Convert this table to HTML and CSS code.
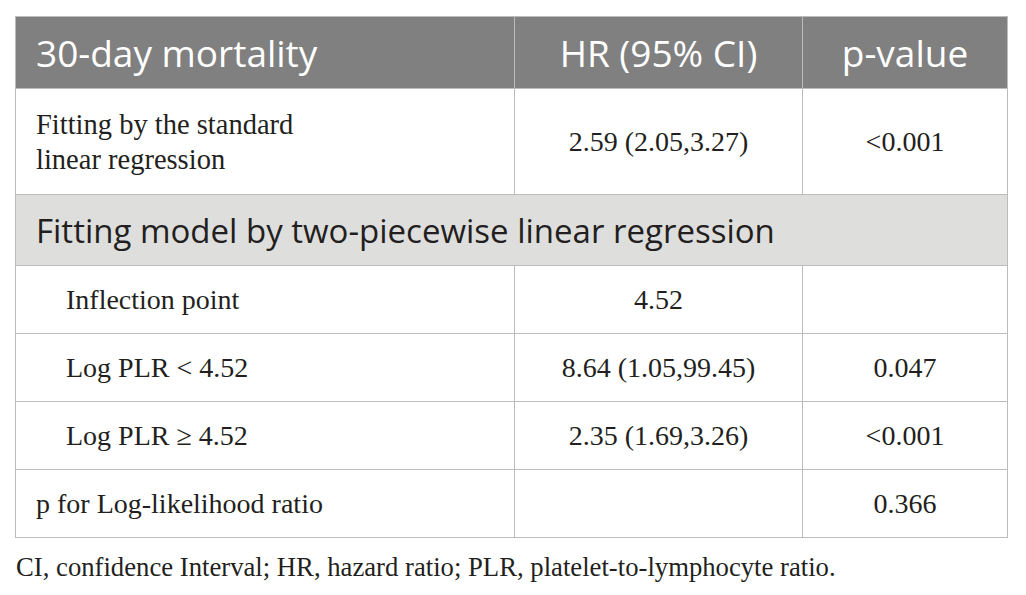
FILE: index.html
```html
<!DOCTYPE html>
<html lang="en">

<head>
    <meta charset="UTF-8">
    <title>Table</title>
    <link rel="stylesheet" href="styles.css">
</head>

<body>
    <table class="tab">
        <colgroup>
            <col class="c1">
            <col class="c2">
            <col class="c3">
        </colgroup>
        <tr class="head">
            <th class="left">30-day mortality</th>
            <th>HR (95% CI)</th>
            <th>p-value</th>
        </tr>
        <tr class="tall">
            <td class="left">Fitting by the standard<br>linear regression</td>
            <td>2.59 (2.05,3.27)</td>
            <td>&lt;0.001</td>
        </tr>
        <tr class="section">
            <td class="left" colspan="3">Fitting model by two-piecewise linear regression</td>
        </tr>
        <tr>
            <td class="left sub">Inflection point</td>
            <td>4.52</td>
            <td></td>
        </tr>
        <tr>
            <td class="left sub">Log PLR &lt; 4.52</td>
            <td>8.64 (1.05,99.45)</td>
            <td>0.047</td>
        </tr>
        <tr>
            <td class="left sub">Log PLR ≥ 4.52</td>
            <td>2.35 (1.69,3.26)</td>
            <td>&lt;0.001</td>
        </tr>
        <tr>
            <td class="left">p for Log-likelihood ratio</td>
            <td></td>
            <td>0.366</td>
        </tr>
    </table>
    <p class="note">CI, confidence Interval; HR, hazard ratio; PLR, platelet-to-lymphocyte ratio.</p>
</body>

</html>
```

FILE: styles.css
```css
body {
    margin: 0;
    padding: 16px 19px 0 15px;
    background: #fff;
    font-family: "Liberation Serif", "Times New Roman", serif;
    color: #231f20;
}

.tab {
    width: 992px;
    border-collapse: collapse;
    table-layout: fixed;
}

.c1 {
    width: 499px;
}

.c2 {
    width: 288px;
}

.c3 {
    width: 205px;
}

.tab th,
.tab td {
    border: 1px solid #bcbcbc;
    text-align: center;
    padding: 0 10px;
    font-size: 28px;
    line-height: 35px;
    height: 67px;
}

.tab .left {
    text-align: left;
    padding-left: 20px;
}

.tab .sub {
    padding-left: 50px;
}

.head th {
    background: #7f807f;
    color: #fff;
    font-family: "Open Sans", sans-serif;
    font-weight: normal;
    font-size: 37px;
    height: 71px;
    border-color: #bcbcbc;
}

.tall td {
    height: 105px;
}

.tall .left {
    font-size: 28.5px;
}

.section td {
    background: #dededd;
    font-family: "Open Sans", sans-serif;
    font-size: 33px;
    height: 70px;
    color: #231f20;
}

.note {
    margin: 12px 0 0 1px;
    font-size: 26.7px;
    line-height: 34px;
}
```
